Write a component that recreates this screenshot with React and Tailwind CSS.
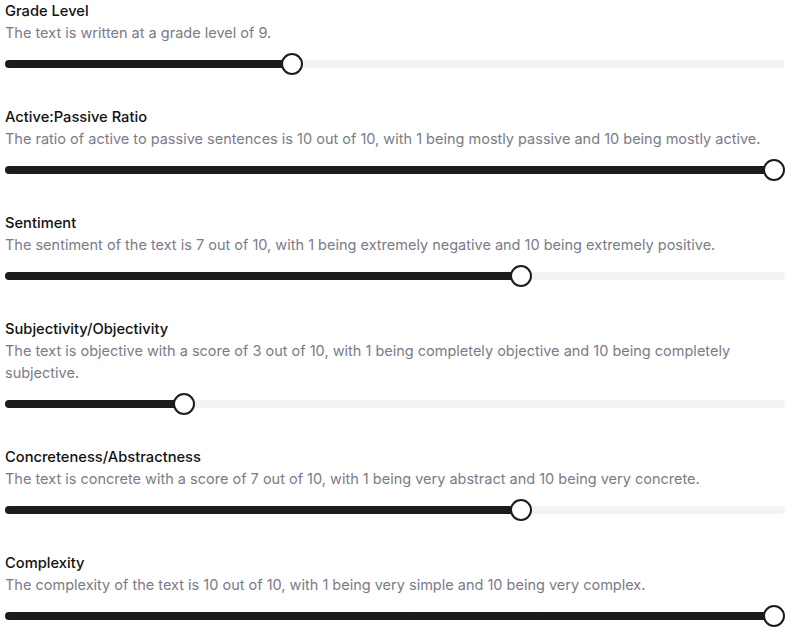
import React from "react";

const items = [
  { title: "Grade Level", desc: "The text is written at a grade level of 9.", pct: (9 - 1) / 22 },
  { title: "Active:Passive Ratio", desc: "The ratio of active to passive sentences is 10 out of 10, with 1 being mostly passive and 10 being mostly active.", pct: 1 },
  { title: "Sentiment", desc: "The sentiment of the text is 7 out of 10, with 1 being extremely negative and 10 being extremely positive.", pct: 6 / 9 },
  { title: "Subjectivity/Objectivity", desc: "The text is objective with a score of 3 out of 10, with 1 being completely objective and 10 being completely subjective.", pct: 2 / 9 },
  { title: "Concreteness/Abstractness", desc: "The text is concrete with a score of 7 out of 10, with 1 being very abstract and 10 being very concrete.", pct: 6 / 9 },
  { title: "Complexity", desc: "The complexity of the text is 10 out of 10, with 1 being very simple and 10 being very complex.", pct: 1 },
];

function Slider({ pct }) {
  const center = `calc(11px + (100% - 22px) * ${pct})`;
  return (
    <div className="relative h-10 flex items-center">
      <div className="relative w-full h-2 rounded-full bg-[#f3f3f3]">
        <div className="absolute left-0 top-0 h-2 rounded-full bg-[#1c1c1e]" style={{ width: center }} />
      </div>
      <div
        className="absolute top-1/2 -translate-y-1/2 w-[22px] h-[22px] rounded-full bg-white border-2 border-[#1c1c1e]"
        style={{ left: `calc((100% - 22px) * ${pct})` }}
      />
    </div>
  );
}

export default function App() {
  return (
    <div className="w-[800px] h-[639px] overflow-hidden bg-white px-[5px] pr-[15px] font-['Inter',sans-serif]">
      <div className="flex flex-col gap-[22px]">
        {items.map((it) => (
          <div key={it.title} className="flex flex-col">
            <div className="text-[14.7px] leading-[22px] font-medium text-[#111111]">{it.title}</div>
            <div className="text-[14.5px] leading-[22px] text-[#7a7b88]">{it.desc}</div>
            <Slider pct={it.pct} />
          </div>
        ))}
      </div>
    </div>
  );
}
